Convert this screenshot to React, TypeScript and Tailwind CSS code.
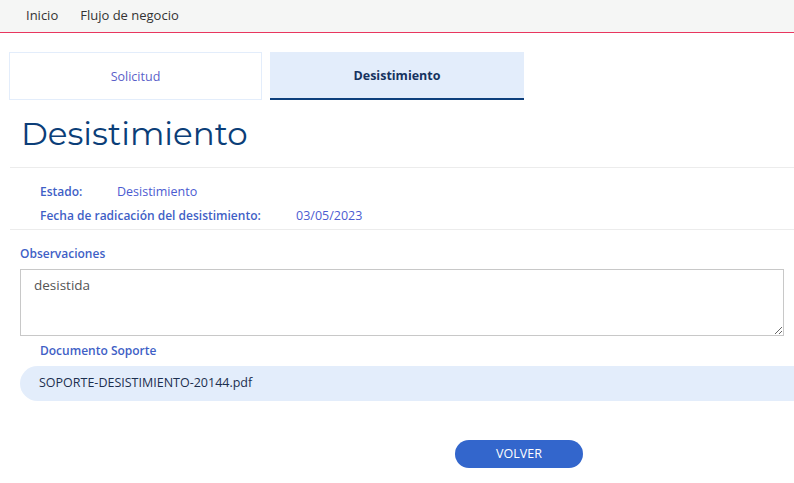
import { useState } from 'react'

export default function App() {
  const [obs, setObs] = useState('desistida')

  return (
    <div className="min-h-[483px] w-[794px] overflow-hidden bg-white font-['Open_Sans','Noto_Sans',sans-serif]">
      {/* Top nav */}
      <nav className="flex h-[33px] items-center gap-[22px] border-b border-[#e8365f] bg-[#f5f6f5] pl-[26px] text-[13px] text-[#333]">
        <span>Inicio</span>
        <span>Flujo de negocio</span>
      </nav>

      {/* Tabs */}
      <div className="mt-[19px] flex gap-2 pl-[9px]">
        <div className="flex h-[48px] w-[253px] items-center justify-center border border-[#e3edfb] pt-[2px] text-[12.5px] text-[#5a5fc9]">
          Solicitud
        </div>
        <div className="flex h-[48px] w-[254px] items-center justify-center border-b-2 border-[#0d3f7c] bg-[#e3edfb] pt-[2px] text-[12.5px] font-bold text-[#16335f]">
          Desistimiento
        </div>
      </div>

      {/* Title */}
      <h1 className="mt-[14px] pl-[21px] font-['Montserrat','Noto_Sans',sans-serif] text-[32.5px] leading-[40px] text-[#0b3e78]">
        Desistimiento
      </h1>

      <div className="ml-[10px] mt-[13px] border-t border-[#ececec] pt-[12px] pb-[1px] pl-[30px] text-[12.5px]">
        <div className="flex h-[24px] items-center">
          <span className="w-[77px] text-[12px] font-semibold text-[#3f5fc6]">Estado:</span>
          <span className="text-[#4c5bd1]">Desistimiento</span>
        </div>
        <div className="flex h-[24px] items-center">
          <span className="w-[256px] text-[12px] font-semibold text-[#3f5fc6]">Fecha de radicación del desistimiento:</span>
          <span className="text-[#4c5bd1]">03/05/2023</span>
        </div>
      </div>

      <div className="ml-[10px] border-t border-[#ececec]" />

      {/* Observaciones */}
      <div className="pl-[20px] pt-[15px]">
        <label className="block text-[12px] font-semibold text-[#3f5fc6]">Observaciones</label>
        <textarea
          value={obs}
          onChange={(e) => setObs(e.target.value)}
          className="mt-[6px] block h-[67px] w-[764px] border border-[#c8c8c8] px-[13px] py-[5px] text-[13.5px] text-[#555] outline-none"
        />
      </div>

      {/* Documento */}
      <div className="mt-[6px] pl-[40px] text-[12px] font-semibold text-[#3f5fc6]">Documento Soporte</div>
      <div className="ml-[20px] mt-[6px] flex h-[35px] items-center rounded-l-[18px] bg-[#e3edfb] pl-[19px] text-[12.5px] text-[#1c2f4f]">
        SOPORTE-DESISTIMIENTO-20144.pdf
      </div>

      <div className="mt-[39px] flex pl-[455px]">
        <button className="h-[28px] w-[128px] rounded-full bg-[#3366cc] text-[12.5px] text-white">
          VOLVER
        </button>
      </div>
    </div>
  )
}
